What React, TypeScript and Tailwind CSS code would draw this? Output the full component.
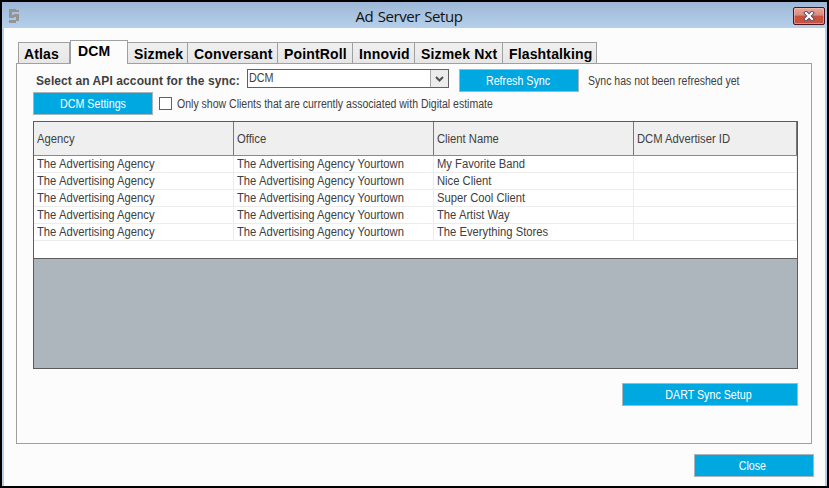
import type { ReactNode } from "react";

const tabs = [
  { label: "Atlas", width: "w-[52px]" },
  { label: "DCM", width: "w-[58px]", active: true },
  { label: "Sizmek", width: "w-[60px]" },
  { label: "Conversant", width: "w-[90px]" },
  { label: "PointRoll", width: "w-[75px]" },
  { label: "Innovid", width: "w-[62px]" },
  { label: "Sizmek Nxt", width: "w-[88px]" },
  { label: "Flashtalking", width: "w-[94px]" },
];

const columns = ["Agency", "Office", "Client Name", "DCM Advertiser ID"];

const clients = [
  "My Favorite Band",
  "Nice Client",
  "Super Cool Client",
  "The Artist Way",
  "The Everything Stores",
];

function Button({ className, children }: { className: string; children: ReactNode }) {
  return (
    <button
      className={`flex h-[23px] shrink-0 items-center justify-center border border-[#a9b4bb] bg-[#00a8e1] pt-px leading-none text-white ${className}`}
    >
      <span className="scale-x-[0.89] whitespace-nowrap">{children}</span>
    </button>
  );
}

// Slightly condensed label text
function Label({ className = "", children }: { className?: string; children: ReactNode }) {
  return (
    <span className={`inline-block origin-left scale-x-[0.877] whitespace-nowrap leading-[14px] ${className}`}>
      {children}
    </span>
  );
}

function Cell({ children }: { children?: ReactNode }) {
  return (
    <div className="border-r border-[#ececec] pl-[3px]">
      <span className="block origin-left scale-x-[0.937] whitespace-nowrap">{children}</span>
    </div>
  );
}

function TitleBar() {
  return (
    <div className="flex h-[26px] shrink-0 items-start justify-between bg-linear-to-b from-[#9db8d6] to-[#b6d0eb] pl-[7px] pr-[2px]">
      <svg className="mt-[7px] h-[14px] w-[10px]" viewBox="0 0 10 14" fill="#949496" shapeRendering="crispEdges">
        <path d="M0 0h7v3H3v3h2v3H0z" />
        <path d="M7 1h3v2H7zM5 5h5v7H7V8H5z" />
        <path d="M0 11h7v3H0z" />
      </svg>
      <h1 className="mt-[4px] pl-[6px] font-['Open_Sans',sans-serif] text-[15px] leading-[20px] tracking-[-0.45px] text-[#111] [word-spacing:1px]">
        Ad Server Setup
      </h1>
      <button className="mt-[5px] flex h-[18px] w-[32px] items-center justify-center rounded-[2px] border border-[#4c1420] bg-linear-to-b from-[#e9a79c] from-0% via-[#d98a7d] via-45% to-[#c8513f] to-50% shadow-[inset_0_0_0_1px_rgba(255,200,190,0.5)]">
        <svg className="h-[10px] w-[12px]" viewBox="0 0 12 10">
          <path d="M3 2l6 6M9 2L3 8" stroke="#4b4f63" strokeWidth="4" strokeLinecap="square" />
          <path d="M3 2l6 6M9 2L3 8" stroke="#fff" strokeWidth="2.2" strokeLinecap="square" />
        </svg>
      </button>
    </div>
  );
}

function TabStrip() {
  return (
    <div className="-mb-px ml-[2px] flex h-[24px] items-end text-[14px] font-bold leading-none tracking-[0.15px] text-black">
      {tabs.map((tab) =>
        tab.active ? (
          <div
            key={tab.label}
            className={`relative flex h-[24px] items-start border border-b-0 border-[#a0a0a0] bg-[#fcfcfc] pl-[7px] pt-[3px] ${tab.width}`}
          >
            {tab.label}
          </div>
        ) : (
          <div
            key={tab.label}
            className={`flex h-[22px] items-start whitespace-nowrap border-y border-r border-[#a0a0a0] bg-linear-to-b from-[#f0f0f0] to-[#e6e6e6] pl-[6px] pt-[4px] first:border-l first:pl-[5px] ${tab.width}`}
          >
            {tab.label}
          </div>
        ),
      )}
    </div>
  );
}

function ClientTable() {
  return (
    <div className="ml-[16px] mt-[6px] h-[248px] w-[765px] border border-[#5c5c5c] bg-[#adb5bd]">
      <div className="h-[137px] border-b border-[#5c5c5c] bg-white">
        <div className="grid h-[34px] grid-cols-[200px_200px_200px_163px] border-b border-[#8a8a8a] bg-[#efefef]">
          {columns.map((name) => (
            <div key={name} className="flex items-center border-r border-[#777] pl-[3px] pt-px">
              <span className="origin-left scale-x-[0.937] whitespace-nowrap">{name}</span>
            </div>
          ))}
        </div>
        {clients.map((client) => (
          <div
            key={client}
            className="grid h-[17px] grid-cols-[200px_200px_200px_163px] border-b border-[#ececec] leading-[16px]"
          >
            <Cell>The Advertising Agency</Cell>
            <Cell>The Advertising Agency Yourtown</Cell>
            <Cell>{client}</Cell>
            <Cell />
          </div>
        ))}
      </div>
    </div>
  );
}

export default function App() {
  return (
    <div className="h-[488px] w-[829px] border-2 border-black bg-[#fcfcfc] font-['Liberation_Sans',Arial,sans-serif] text-[12px] text-[#404040]">
      <div className="flex h-full flex-col">
        <TitleBar />
        <div className="flex-1 border-x-2 border-[#b5cfeb] pl-[12px] pt-[12px]">
          <TabStrip />
          <div className="h-[381px] w-[796px] border border-[#a0a0a0]">
            <div className="flex h-[28px] items-start pl-[19px] pt-[5px]">
              <span className="w-[211px] shrink-0 whitespace-nowrap pt-[5px] font-bold leading-[14px] tracking-[0.1px]">
                Select an API account for the sync:
              </span>
              <div className="flex h-[19px] w-[202px] shrink-0 border border-[#606060] bg-white">
                <span className="flex-1 origin-left scale-x-[0.9] pl-px leading-[17px]">DCM</span>
                <div className="flex w-[18px] items-center justify-center border-l border-[#a8a8a8] bg-[#ececec]">
                  <svg className="h-[6px] w-[9px]" viewBox="0 0 9 6" fill="none">
                    <path d="M1 1l3.5 3.5L8 1" stroke="#505050" strokeWidth="2" />
                  </svg>
                </div>
              </div>
              <Button className="ml-[10px] w-[120px] pr-[2px]">Refresh Sync</Button>
              <Label className="ml-[9px] mt-[5px]">Sync has not been refreshed yet</Label>
            </div>
            <div className="flex h-[23px] items-center pl-[16px]">
              <Button className="w-[120px]">DCM Settings</Button>
              <div className="ml-[6px] h-[13px] w-[13px] border border-[#606060] bg-white" />
              <Label className="ml-[5px]">
                Only show Clients that are currently associated with Digital estimate
              </Label>
            </div>
            <ClientTable />
            <Button className="ml-[605px] mt-[14px] w-[176px] pr-[3px]">DART Sync Setup</Button>
          </div>
          <Button className="ml-[678px] mt-[10px] w-[120px] pr-[3px]">Close</Button>
        </div>
      </div>
    </div>
  );
}
